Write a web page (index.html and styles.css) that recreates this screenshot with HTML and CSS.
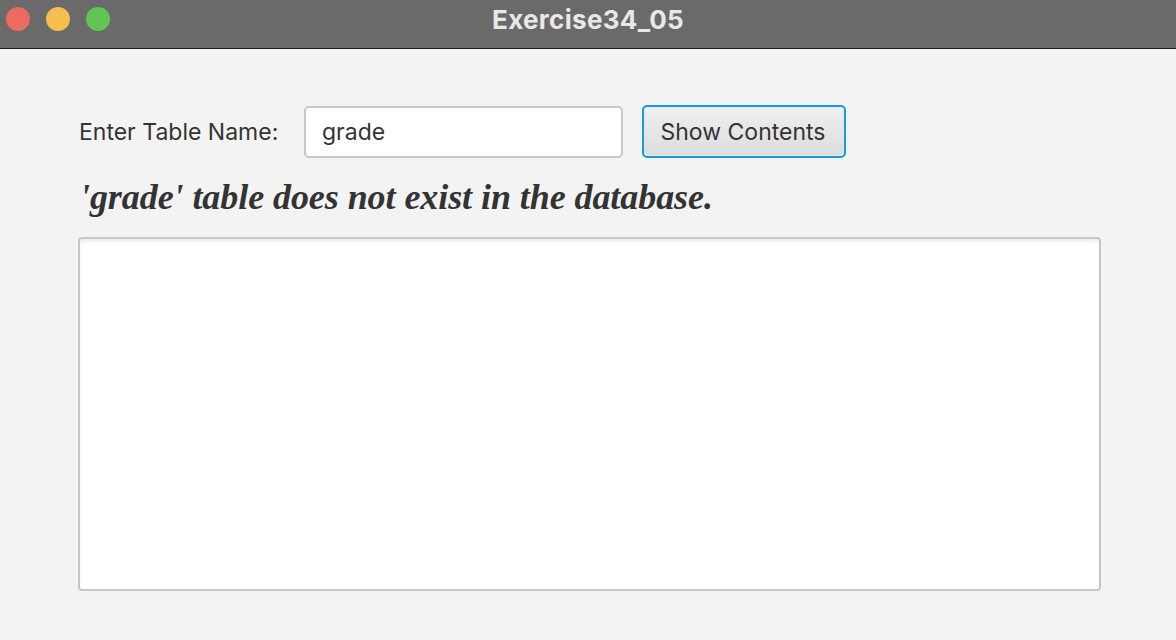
FILE: index.html
```html
<!DOCTYPE html>
<html>
<head>
<meta charset="utf-8">
<link rel="stylesheet" href="styles.css">
</head>
<body>
<div class="window">
  <div class="titlebar">
    <div class="lights">
      <span class="light red"></span>
      <span class="light yellow"></span>
      <span class="light green"></span>
    </div>
    <div class="title">Exercise34_05</div>
  </div>
  <div class="content">
    <div class="row">
      <label class="label">Enter Table Name:</label>
      <div class="field">grade</div>
      <button class="btn">Show Contents</button>
    </div>
    <div class="message">'grade' table does not exist in the database.</div>
    <div class="area"></div>
  </div>
</div>
</body>
</html>
```
FILE: styles.css
```css
* { box-sizing: border-box; }
html, body { margin: 0; padding: 0; }
body { width: 1176px; height: 640px; overflow: hidden; background: #f3f3f3; font-family: "Inter", "Liberation Sans", sans-serif; }
.window { display: flex; flex-direction: column; height: 640px; }
.titlebar {
  position: relative;
  height: 49px;
  background: #6a6a6a;
  border-bottom: 1px solid #1e1e1e;
  display: flex;
  align-items: center;
  justify-content: center;
}
.lights { position: absolute; left: 6px; top: 7px; display: flex; gap: 16px; }
.light { width: 24px; height: 24px; border-radius: 50%; display: block; }
.red { background: #ec6a5e; }
.yellow { background: #f4bf4f; }
.green { background: #61c554; }
.title { color: #e8e8e8; font-weight: 700; font-size: 26px; margin-top: -10px; letter-spacing: 0.3px; }
.content { padding: 56px 75px 0 78px; display: flex; flex-direction: column; }
.row { display: flex; align-items: center; height: 53px; }
.label { font-size: 23px; color: #333; margin-left: 1px; width: 225px; }
.field {
  width: 319px; height: 52px;
  background: #fff;
  border: 2px solid #c8c8c8;
  border-radius: 5px;
  font-size: 23px; color: #333;
  padding: 0 16px;
  display: flex; align-items: center;
}
.btn {
  margin-left: 19px;
  width: 204px; height: 53px;
  border: 2px solid #1c9ad6;
  border-radius: 5px;
  box-shadow: inset 0 0 0 1px #d4eaf5;
  background: linear-gradient(#f0f0f0, #dcdcdc);
  font-family: inherit;
  font-size: 23px; color: #333;
  padding: 0 2px 0 0;
}
.message {
  font-family: "Liberation Serif", serif;
  font-style: italic; font-weight: 700;
  font-size: 36px; color: #333;
  margin: 19px 0 0 2px;
  line-height: 40px;
  letter-spacing: -0.07px;
}
.area {
  margin-top: 20px;
  width: 1023px; height: 354px;
  background: #fff;
  border: 2px solid #c6c6c6;
  border-radius: 4px;
  box-shadow: inset 0 4px 4px -2px #e8e8e8;
}
```
